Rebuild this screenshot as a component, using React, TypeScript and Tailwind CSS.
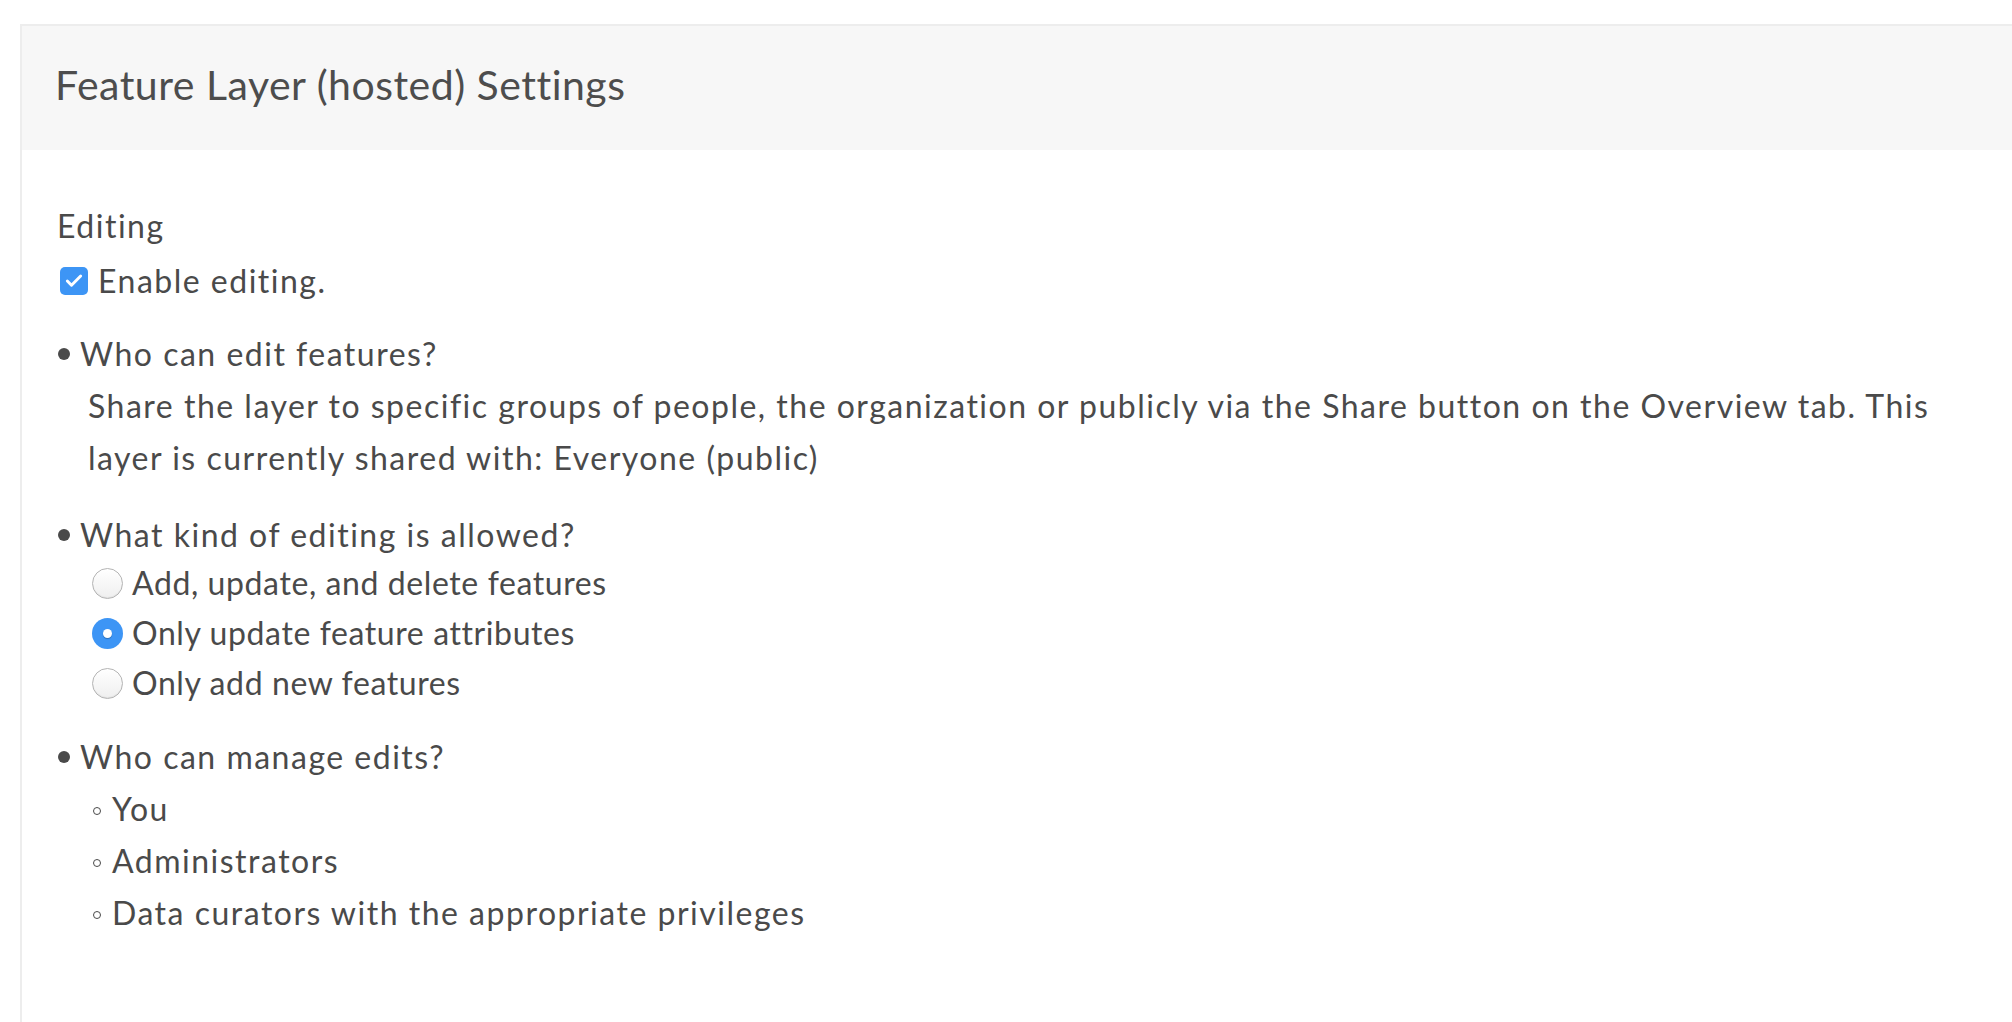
import { Check } from 'lucide-react';

const font = { fontFamily: 'Lato, "Noto Sans", "Liberation Sans", sans-serif' };

const Bullet = () => <span className="ml-[1px] mr-[10px] inline-block h-[12px] w-[12px] shrink-0 rounded-full bg-[#4a4a4a]" />;

const Radio = ({ checked }: { checked?: boolean }) =>
  checked ? (
    <span className="mr-[9px] flex h-[31px] w-[31px] shrink-0 items-center justify-center rounded-full bg-[#3d95f5]">
      <span className="h-[9px] w-[9px] rounded-full bg-white shadow-[0_1px_1px_rgba(0,0,0,0.25)]" />
    </span>
  ) : (
    <span className="mr-[9px] h-[31px] w-[31px] shrink-0 rounded-full border border-[#b4b4b4] bg-gradient-to-b from-white to-[#efefef] shadow-[inset_0_-1px_1px_rgba(0,0,0,0.06)]" />
  );

const SubItem = ({ children }: { children: string }) => (
  <li className="flex items-center leading-[52px]">
    <span className="ml-[36px] mr-[11px] mt-[4px] inline-block h-[8px] w-[8px] shrink-0 rounded-full border-[1.5px] border-[#4a4a4a]" />
    {children}
  </li>
);

export default function App() {
  const options = [
    { label: 'Add, update, and delete features', checked: false },
    { label: 'Only update feature attributes', checked: true },
    { label: 'Only add new features', checked: false },
  ];

  return (
    <div className="flex h-[1022px] flex-col bg-white pl-[20px] pt-[24px] text-[#4a4a4a]" style={font}>
      <div className="flex flex-1 flex-col border-l-2 border-t-2 border-[#ededed]">
        {/* header */}
        <div className="flex h-[124px] items-center bg-[#f7f7f7] pb-[8px] pl-[33px]">
          <h1 className="text-[41px] font-normal leading-none tracking-[0.5px] text-[#4d4d4d]">Feature Layer (hosted) Settings</h1>
        </div>

        {/* body */}
        <div className="pl-[35px] pr-[40px] pt-[50px] text-[32px] leading-[52px] tracking-[1.5px]">
          <div>Editing</div>
          <label className="mt-[3px] flex items-center">
            <span className="ml-[3px] mr-[10px] flex h-[28px] w-[28px] shrink-0 items-center justify-center rounded-[5px] bg-[#3d95f5]">
              <Check className="h-[20px] w-[20px] text-white" strokeWidth={3.5} />
            </span>
            Enable editing.
          </label>

          <ul>
            <li className="mt-[21px]">
              <div className="flex items-center">
                <Bullet />
                Who can edit features?
              </div>
              <p className="pl-[31px]">
                Share the layer to specific groups of people, the organization or publicly via the Share button on the
                Overview tab. This layer is currently shared with: Everyone (public)
              </p>
            </li>

            <li className="mt-[25px]">
              <div className="flex items-center">
                <Bullet />
                What kind of editing is allowed?
              </div>
              <div className="-mt-[3px]">
                {options.map((o) => (
                  <div key={o.label} className="flex items-center pl-[35px] leading-[50px] tracking-[0.6px]">
                    <Radio checked={o.checked} />
                    {o.label}
                  </div>
                ))}
              </div>
            </li>

            <li className="mt-[23px]">
              <div className="flex items-center">
                <Bullet />
                Who can manage edits?
              </div>
              <ul>
                <SubItem>You</SubItem>
                <SubItem>Administrators</SubItem>
                <SubItem>Data curators with the appropriate privileges</SubItem>
              </ul>
            </li>
          </ul>
        </div>
      </div>
    </div>
  );
}
